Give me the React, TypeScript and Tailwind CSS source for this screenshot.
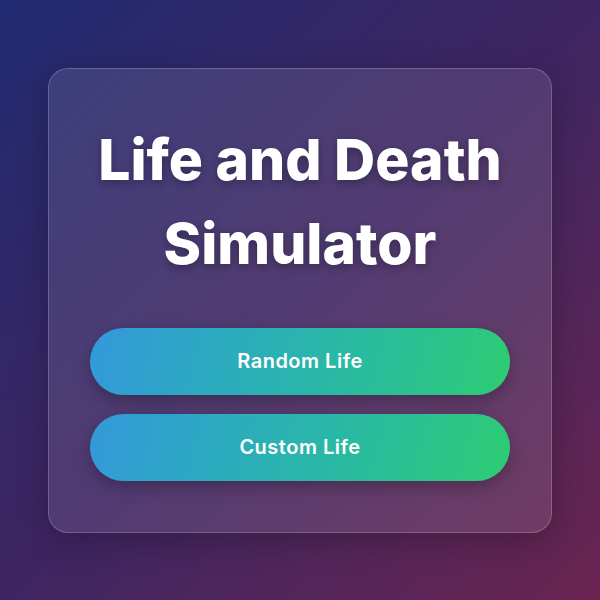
import React from "react";

const buttons = ["Random Life", "Custom Life"];

const App = () => {
  return (
    <div className="w-full h-screen flex items-center justify-center bg-linear-135 from-[#1f2a70] via-[#3e2562] to-[#6a2350] font-['Inter',sans-serif]">
      <div className="w-[504px] h-[465px] flex flex-col px-[41px] pt-[49px] rounded-[20px] border border-white/20 bg-white/10 shadow-[0_8px_32px_rgba(0,0,0,0.25)]">
        <h1 className="text-white text-[57px] leading-[84px] font-extrabold text-center [text-shadow:0_3px_8px_rgba(0,0,0,0.3)]">
          Life and Death Simulator
        </h1>
        <div className="mt-[42px] flex flex-col gap-[19px]">
          {buttons.map((label) => (
            <button
              key={label}
              className="h-[67px] w-full rounded-full bg-linear-105 from-[#3498db] to-[#2ecc71] text-white text-[20px] font-semibold tracking-[0.5px] shadow-[0_6px_16px_rgba(0,0,0,0.25)]"
            >
              {label}
            </button>
          ))}
        </div>
      </div>
    </div>
  );
};

export default App;
